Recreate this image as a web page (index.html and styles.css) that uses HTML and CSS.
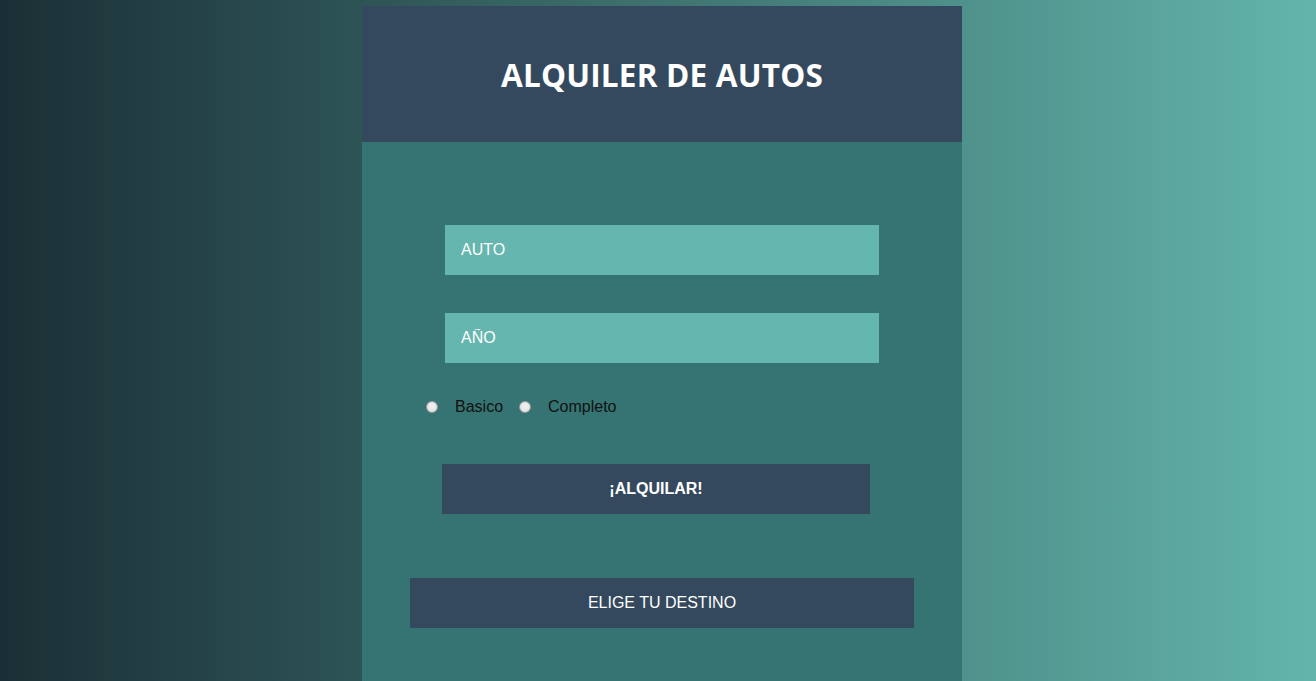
FILE: index.html
```html
<!DOCTYPE html>
<html lang="es">
<head>
<meta charset="utf-8">
<title>Alquiler de autos</title>
<link rel="stylesheet" href="styles.css">
</head>
<body>
<main class="card">
  <header class="card-header">
    <h1 class="title">ALQUILER DE AUTOS</h1>
  </header>
  <section class="card-body">
    <form class="form">
      <input class="field" type="text" placeholder="AUTO">
      <input class="field field-second" type="text" placeholder="AÑO">
      <div class="options">
        <label class="option"><input class="radio" type="radio" name="plan"><span>Basico</span></label>
        <label class="option"><input class="radio" type="radio" name="plan"><span>Completo</span></label>
      </div>
      <button class="btn-rent" type="button">¡ALQUILAR!</button>
    </form>
    <button class="btn-dest" type="button">ELIGE TU DESTINO</button>
  </section>
</main>
</body>
</html>
```
FILE: styles.css
```css
html, body {
  margin: 0;
  padding: 0;
  height: 100%;
}
body {
  background: linear-gradient(to right, #1a2f35 0%, #63b5ab 100%);
  font-family: "Liberation Sans", Arial, sans-serif;
  overflow: hidden;
  padding-left: 8px;
  box-sizing: border-box;
}
.card {
  width: 600px;
  margin: 6px auto 0;
  display: flex;
  flex-direction: column;
  min-height: 720px;
}
.card-header {
  background: #34495e;
  height: 136px;
  display: flex;
  align-items: center;
  justify-content: center;
}
.title {
  margin: 0;
  color: #ffffff;
  font-family: "Open Sans", sans-serif;
  font-weight: 700;
  font-size: 31.5px;
  letter-spacing: 0.2px;
  padding-top: 0;
}
.card-body {
  flex: 1;
  background: #357472;
  display: flex;
  flex-direction: column;
  padding-top: 83px;
}
.form {
  display: flex;
  flex-direction: column;
}
.field {
  box-sizing: border-box;
  width: 434px;
  height: 50px;
  margin-left: 83px;
  border: none;
  outline: none;
  background: #65b6ae;
  padding: 0 16px;
  color: #ffffff;
  font-family: "Liberation Sans", Arial, sans-serif;
  font-size: 16px;
}
.field::placeholder {
  color: #ffffff;
  opacity: 1;
}
.field-second {
  margin-top: 38px;
}
.options {
  display: flex;
  align-items: center;
  margin-left: 59px;
  margin-top: 34px;
  height: 20px;
}
.option {
  display: flex;
  align-items: center;
  font-size: 16px;
  color: #111111;
  margin-right: 11px;
}
.radio {
  appearance: none;
  -webkit-appearance: none;
  box-sizing: border-box;
  width: 12px;
  height: 12px;
  margin: 0 17px 0 5px;
  border-radius: 50%;
  border: 1px solid #9a9a9a;
  background: radial-gradient(circle at 50% 40%, #f2f2f2 0%, #dcdcdc 100%);
}
.btn-rent {
  width: 428px;
  height: 50px;
  margin-left: 80px;
  margin-top: 47px;
  border: none;
  background: #34495e;
  color: #ffffff;
  font-family: "Liberation Sans", Arial, sans-serif;
  font-weight: 700;
  font-size: 16px;
  padding: 0;
}
.btn-dest {
  width: 504px;
  height: 50px;
  margin-left: 48px;
  margin-top: 64px;
  border: none;
  background: #34495e;
  color: #ffffff;
  font-family: "Liberation Sans", Arial, sans-serif;
  font-size: 16px;
  padding: 0;
}
```
